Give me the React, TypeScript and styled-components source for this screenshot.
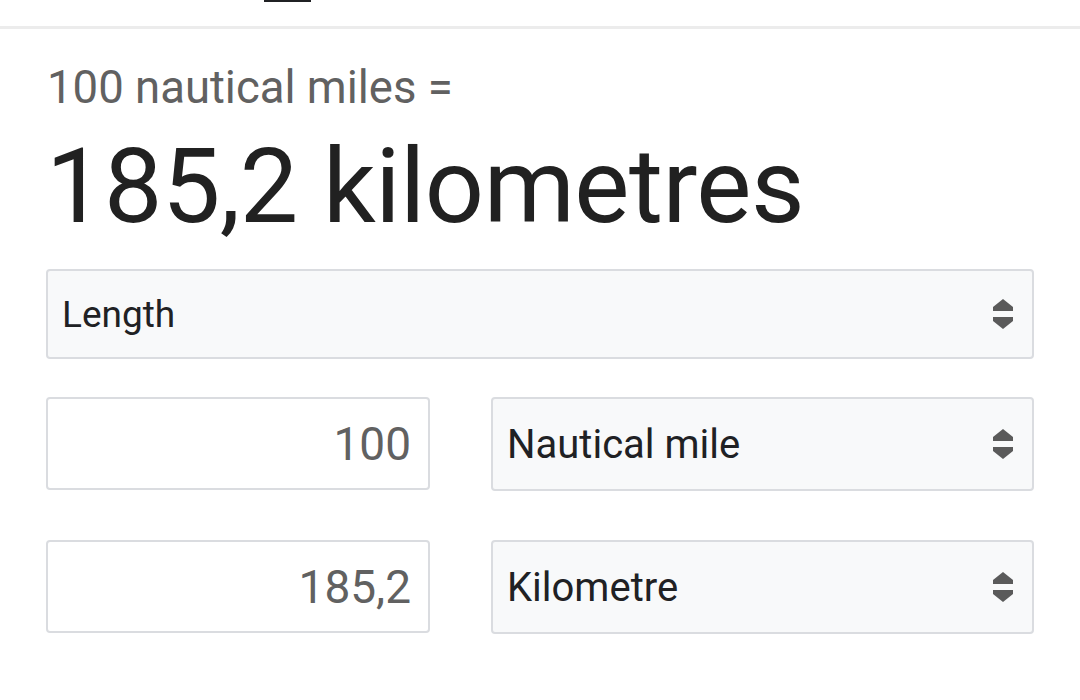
import React from "react";
import styled, { createGlobalStyle } from "styled-components";

const Global = createGlobalStyle`
  html, body { margin: 0; padding: 0; background: #fff; }
  body { font-family: Roboto, "Noto Sans", Arial, sans-serif; }
  * { box-sizing: border-box; }
`;

const Page = styled.div`
  width: 1080px;
  height: 700px;
  overflow: hidden;
  background: #fff;
`;

const TabBar = styled.div`
  height: 29px;
  border-bottom: 3px solid #ececec;
  padding-left: 264px;
`;

const TabIndicator = styled.div`
  width: 47px;
  height: 2px;
  background: #202124;
`;

const Content = styled.div`
  padding: 0 46px;
  display: flex;
  flex-direction: column;
`;

const Query = styled.div`
  margin-top: 32px;
  margin-left: 1px;
  font-size: 45.5px;
  line-height: 54px;
  color: #616161;
`;

const Result = styled.div`
  font-size: 104px;
  line-height: 143px;
  color: #212121;
  letter-spacing: -0.5px;
`;

const SelectBox = styled.div<{ $h: number; $fs: number }>`
  position: relative;
  height: ${(p) => p.$h}px;
  background: #f8f9fa;
  border: 2px solid #dadce0;
  border-radius: 4px;
  display: flex;
  align-items: center;
  padding-left: 14px;
  color: #202124;
  font-size: ${(p) => p.$fs}px;
`;

const Arrows = styled.svg`
  position: absolute;
  right: 19px;
  top: 50%;
  transform: translateY(-50%);
`;

const Row = styled.div`
  display: grid;
  grid-template-columns: 384px 1fr;
  column-gap: 61px;
`;

const NumInput = styled.div`
  height: 93px;
  border: 2px solid #dadce0;
  border-radius: 4px;
  background: #fff;
  display: flex;
  align-items: center;
  justify-content: flex-end;
  padding-right: 17px;
  font-size: 46px;
  color: #616161;
`;

const Stack = styled.div`
  margin-top: 11px;
  display: flex;
  flex-direction: column;
  gap: 38px;
`;

const Rows = styled.div`
  display: flex;
  flex-direction: column;
  gap: 49px;
`;

const ArrowIcon = () => (
  <Arrows width="20" height="30" viewBox="0 0 20 30">
    <path d="M10 0 L20 8 L20 12 L0 12 L0 8 Z" fill="#5a5a5a" />
    <path d="M0 18 L20 18 L20 22 L10 30 L0 22 Z" fill="#5a5a5a" />
  </Arrows>
);

const Select = ({ label, h, fs }: { label: string; h: number; fs: number }) => (
  <SelectBox $h={h} $fs={fs}>
    {label}
    <ArrowIcon />
  </SelectBox>
);

export default function App() {
  return (
    <Page>
      <Global />
      <TabBar>
        <TabIndicator />
      </TabBar>
      <Content>
        <Query>100 nautical miles =</Query>
        <Result>185,2 kilometres</Result>
        <Stack>
          <Select label="Length" h={90} fs={37} />
          <Rows>
            <Row>
              <NumInput>100</NumInput>
              <Select label="Nautical mile" h={94} fs={40} />
            </Row>
            <Row>
              <NumInput>185,2</NumInput>
              <Select label="Kilometre" h={94} fs={40} />
            </Row>
          </Rows>
        </Stack>
      </Content>
    </Page>
  );
}
